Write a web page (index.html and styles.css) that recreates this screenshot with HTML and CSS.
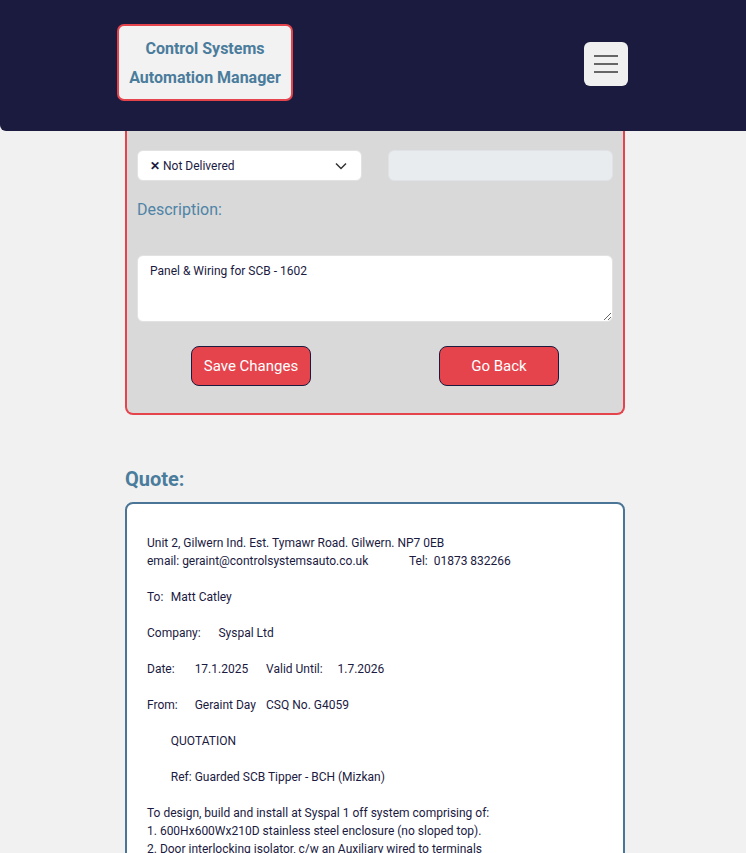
FILE: index.html
```html
<!DOCTYPE html>
<html lang="en">
<head>
<meta charset="utf-8">
<title>Control Systems Automation Manager</title>
<link rel="stylesheet" href="styles.css">
</head>
<body>
<header class="topbar">
  <div class="logo">Control Systems<br>Automation Manager</div>
  <button class="burger" aria-label="Menu">
    <span></span><span></span><span></span>
  </button>
</header>
<main class="main">
  <section class="card">
    <div class="row">
      <div class="select">
        <span><b class="x">✕</b> Not Delivered</span>
        <svg width="12" height="8" viewBox="0 0 12 8"><path d="M1 1.5 L6 6.5 L11 1.5" fill="none" stroke="#333" stroke-width="1.5"/></svg>
      </div>
      <div class="input"></div>
    </div>
    <label class="label">Description:</label>
    <textarea class="textarea">Panel &amp; Wiring for SCB - 1602</textarea>
    <div class="buttons">
      <div class="bcell"><button class="btn">Save Changes</button></div>
      <div class="bcell"><button class="btn">Go Back</button></div>
    </div>
  </section>
  <h2 class="qtitle">Quote:</h2>
  <div class="quote">Unit 2, Gilwern Ind. Est. Tymawr Road. Gilwern. NP7 0EB
email: geraint@controlsystemsauto.co.uk		Tel:  01873 832266

To:	Matt Catley

Company:	Syspal Ltd

Date:	17.1.2025	Valid Until:	1.7.2026

From:	Geraint Day	CSQ No. G4059

	QUOTATION

	Ref: Guarded SCB Tipper - BCH (Mizkan)

To design, build and install at Syspal 1 off system comprising of:
1. 600Hx600Wx210D stainless steel enclosure (no sloped top).
2. Door interlocking isolator, c/w an Auxiliary wired to terminals
3. 24VDC power supply unit.
4. Safety relay for emergency stop and guard interlocks.</div>
</main>
</body>
</html>
```

FILE: styles.css
```css
* { box-sizing: border-box; }
html, body { margin: 0; padding: 0; }
body {
  background: #f1f1f1;
  font-family: Roboto, "Liberation Sans", sans-serif;
  color: #1b1a3f;
}
.topbar {
  height: 131px;
  background: #1b1a3f;
  border-bottom-left-radius: 6px;
  display: flex;
  align-items: center;
  justify-content: space-between;
  padding: 0 118px 0 117px;
}
.logo {
  width: 176px;
  height: 77px;
  margin-top: -6px;
  background: #f2f2f2;
  border: 2px solid #e5444c;
  border-radius: 7px;
  color: #4a7c9c;
  font-weight: 700;
  font-size: 16px;
  line-height: 29px;
  text-align: center;
  padding-top: 8px;
}
.burger {
  width: 44px;
  height: 44px;
  margin-top: -3px;
  background: #f0f0f0;
  border: none;
  border-radius: 6px;
  display: flex;
  flex-direction: column;
  align-items: center;
  justify-content: center;
  gap: 6px;
  padding: 0;
}
.burger span {
  display: block;
  width: 24px;
  height: 2px;
  background: #666;
}
.main {
  width: 500px;
  margin: 0 121px 0 125px;
}
.card {
  background: #d9d9d9;
  border: 2px solid #e5444c;
  border-top: none;
  border-radius: 0 0 8px 8px;
  padding: 19px 10px 27px;
}
.row {
  display: grid;
  grid-template-columns: 1fr 1fr;
  gap: 26px;
}
.select {
  height: 31px;
  background: #fff;
  border: 1px solid #e2e2e2;
  border-radius: 6px;
  display: flex;
  align-items: center;
  justify-content: space-between;
  padding: 0 14px 0 12px;
  font-size: 12px;
  color: #1b1a3f;
}
.x {
  font-weight: 700;
}
.input {
  height: 31px;
  background: #e8ecef;
  border: 1px solid #dfe2e6;
  border-radius: 6px;
}
.label {
  display: block;
  margin-top: 19px;
  font-size: 16px;
  line-height: 20px;
  color: #4f84a6;
}
.textarea {
  display: block;
  width: 100%;
  height: 67px;
  margin-top: 35px;
  background: #fff;
  border: 1px solid #e2e2e2;
  border-radius: 6px;
  padding: 7px 12px;
  font-family: Roboto, "Liberation Sans", sans-serif;
  font-size: 12px;
  line-height: 16px;
  color: #1b1a3f;
}
.buttons {
  display: grid;
  grid-template-columns: 1fr 1fr;
  margin: 24px -10px 0;
}
.bcell {
  display: flex;
  justify-content: center;
}
.btn {
  width: 120px;
  height: 40px;
  background: #e5444c;
  border: 1px solid #1b1a3f;
  border-radius: 8px;
  color: #fff;
  font-family: Roboto, "Liberation Sans", sans-serif;
  font-size: 15px;
}
.qtitle {
  margin: 52px 0 0;
  font-size: 20px;
  line-height: 24px;
  font-weight: 700;
  color: #4a7c9c;
}
.quote {
  margin-top: 11px;
  background: #fff;
  border: 2px solid #4a7596;
  border-radius: 8px;
  padding: 30px 20px 20px;
  white-space: pre-wrap;
  font-size: 12px;
  line-height: 18px;
  color: #1b1a3f;
}
```
